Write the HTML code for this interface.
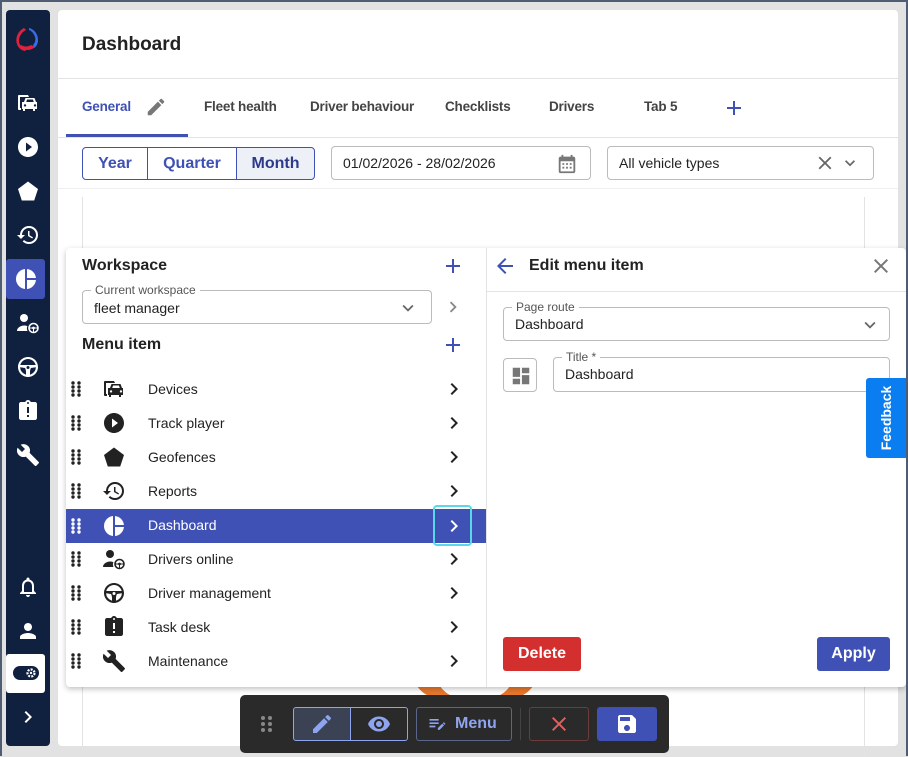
<!DOCTYPE html>
<html><head><meta charset="utf-8"><style>
*{box-sizing:border-box;margin:0;padding:0}
body{width:908px;height:756px;overflow:hidden;background:#e2e2e2;font-family:"Liberation Sans",sans-serif;position:relative;color:#222}
.abs{position:absolute}
.frame{left:0;top:0;width:908px;height:756px;border:2px solid #4f5d72;border-bottom:none;pointer-events:none}
.side{left:6px;top:10px;width:44px;height:736px;background:#10203f;border-radius:4px}
.si{position:absolute;left:10px;width:24px;height:24px;fill:#fff}
.card{left:58px;top:10px;width:840px;height:736px;background:#fff;border-radius:4px}
.hr{position:absolute;height:1px;background:#e3e3e3}
.tab{position:absolute;top:89px;font-size:13.5px;font-weight:bold;color:#444;letter-spacing:-0.2px}
.seg{position:absolute;top:137px;height:33px;border:1px solid #3f51b5;color:#3f51b5;font-size:16px;font-weight:bold;text-align:center;line-height:31px}
.inp{position:absolute;border:1px solid #bbb;border-radius:4px;font-size:14px;color:#222}
.lbl{position:absolute;top:-8px;left:8px;background:#fff;padding:0 4px;font-size:12px;color:#555;line-height:14px}
.row{position:absolute;left:66px;width:420px;height:34px;font-size:14px;color:#222}
.row .t{position:absolute;left:82px;top:9px}
.row svg{position:absolute}
.ic{width:24px;height:24px;fill:#222}
.dg{width:12px;height:18px}
</style></head><body>
<svg width="0" height="0" style="position:absolute"><defs>
<symbol id="play" viewBox="0 0 24 24"><path d="M12 2C6.48 2 2 6.48 2 12s4.48 10 10 10 10-4.48 10-10S17.52 2 12 2zm-2 14.5v-9l6 4.5-6 4.5z"/></symbol>
<symbol id="pent" viewBox="0 0 24 24"><path d="M12 2.5 22 10l-3.8 11.5H5.8L2 10z"/></symbol>
<symbol id="hist" viewBox="0 0 24 24"><path d="M13 3a9 9 0 0 0-9 9H1l3.89 3.89.07.14L9 12H6c0-3.87 3.130-7 7-7s7 3.13 7 7-3.13 7-7 7c-1.93 0-3.68-.79-4.94-2.06l-1.42 1.42A8.954 8.954 0 0 0 13 21a9 9 0 0 0 0-18zm-1 5v5l4.28 2.54.72-1.21-3.5-2.08V8H12z"/></symbol>
<symbol id="pie" viewBox="0 0 24 24"><path d="M11 2.05A10 10 0 0 0 11 21.950zM13 2.05V11h8.95A10 10 0 0 0 13 2.05zM13 13v8.95A10 10 0 0 0 21.95 13z"/></symbol>
<symbol id="drv" viewBox="0 0 24 24"><circle cx="8" cy="7" r="4"/><path d="M1 20c0-3.5 4-5.5 7-5.5 1.2 0 2.4.2 3.4.6A6 6 0 0 0 11.5 20z"/><circle cx="17.5" cy="17" r="4.5" fill="none" stroke="currentColor" stroke-width="1.6"/><circle cx="17.5" cy="17" r="1.4"/><path d="M13.5 16.5h8v1h-8zM17 17h1v4h-1z"/></symbol>
<symbol id="steer" viewBox="0 0 24 24"><path d="M12 2C6.48 2 2 6.48 2 12s4.48 10 10 10 10-4.48 10-10S17.52 2 12 2zm0 2c3.7 0 6.8 2.5 7.7 6H4.3C5.2 6.5 8.3 4 12 4zM4.1 12.2 9 13c.6 1 1 2.5 1 4v2.7a8 8 0 0 1-5.9-7.5zM14 19.7V17c0-1.5.4-3 1-4l4.9-.8A8 8 0 0 1 14 19.7zM12 14a1.5 1.5 0 1 1 0-3 1.5 1.5 0 0 1 0 3z"/></symbol>
<symbol id="task" viewBox="0 0 24 24"><path d="M19 3h-4.18C14.4 1.84 13.3 1 12 1c-1.3 0-2.4.84-2.82 2H5c-1.1 0-2 .9-2 2v14c0 1.1.9 2 2 2h14c1.1 0 2-.9 2-2V5c0-1.1-.9-2-2-2zm-6 15h-2v-2h2v2zm0-4h-2V8h2v6zm-1-9c-.55 0-1-.45-1-1s.45-1 1-1 1 .45 1 1-.45 1-1 1z"/></symbol>
<symbol id="wr" viewBox="0 0 24 24"><path d="M22.7 19l-9.1-9.1c.9-2.3.4-5-1.5-6.9-2-2-5-2.4-7.4-1.3L9 6 6 9 1.6 4.7C.4 7.1.9 10.1 2.9 12.1c1.9 1.9 4.6 2.4 6.9 1.5l9.1 9.1c.4.4 1 .4 1.4 0l2.3-2.3c.5-.4.5-1.1.1-1.4z"/></symbol>
<symbol id="dev" viewBox="0 0 24 24"><path d="M3 4h9l1 2H4v11h1v2H3c-1 0-1-1-1-1V5c0-1 1-1 1-1z"/><path d="M8 11l1.5-4h9l1.5 4h1v7h-2v2h-2v-2H9v2H7v-2H6v-7zm2.2 0h7.6l-.9-2.5h-5.8zM9 13.2a1.2 1.2 0 1 0 0 2.4 1.2 1.2 0 0 0 0-2.4zm10 0a1.2 1.2 0 1 0 0 2.4 1.2 1.2 0 0 0 0-2.4z"/></symbol>
<symbol id="chev" viewBox="0 0 24 24"><path d="M10 6 8.59 7.41 13.17 12l-4.58 4.59L10 18l6-6z"/></symbol>
<symbol id="drag" viewBox="0 0 12 18"><circle cx="3" cy="3" r="1.7"/><circle cx="9" cy="3" r="1.7"/><circle cx="3" cy="7" r="1.7"/><circle cx="9" cy="7" r="1.7"/><circle cx="3" cy="11" r="1.7"/><circle cx="9" cy="11" r="1.7"/><circle cx="3" cy="15" r="1.7"/><circle cx="9" cy="15" r="1.7"/></symbol>
<symbol id="edit" viewBox="0 0 24 24"><path d="M3 17.25V21h3.75L17.81 9.94l-3.75-3.75L3 17.25zM20.71 7.04a1 1 0 0 0 0-1.41l-2.34-2.34a1 1 0 0 0-1.41 0l-1.83 1.83 3.75 3.75 1.83-1.83z"/></symbol>
<symbol id="plus" viewBox="0 0 24 24"><path d="M19 13h-6v6h-2v-6H5v-2h6V5h2v6h6v2z"/></symbol>
</defs></svg>

<div class="abs side">
  <svg class="si" style="top:15px;left:7px;width:30px;height:30px" viewBox="0 0 30 30"><path d="M11 3C5 6 2 13 4 19c1 4 5 7 9 7l-2-3c-3-1-5-4-5-7 0-5 3-9 7-11z" fill="#e0223c"/><path d="M6 22c5 4 12 4 16 0l-4-2c-3 2-7 2-10 0z" fill="#e0223c"/><path d="M16 3c5 1 9 6 9 12 0 4-2 7-4 8l-1-3c2-2 3-5 2-8-1-3-3-6-6-7z" fill="#3d6be8"/></svg>
  <svg class="si" style="top:81px"><use href="#dev"/></svg>
  <svg class="si" style="top:125px"><use href="#play"/></svg>
  <svg class="si" style="top:169px"><use href="#pent"/></svg>
  <svg class="si" style="top:213px"><use href="#hist"/></svg>
  <div class="abs" style="left:0;top:249px;width:39px;height:40px;background:#3f51b5;border-radius:3px"></div>
  <svg class="si" style="top:257px;left:8px"><use href="#pie"/></svg>
  <svg class="si" style="top:301px;color:#fff"><use href="#drv"/></svg>
  <svg class="si" style="top:345px"><use href="#steer"/></svg>
  <svg class="si" style="top:389px"><use href="#task"/></svg>
  <svg class="si" style="top:433px"><use href="#wr"/></svg>
  <svg class="si" style="top:565px" viewBox="0 0 24 24"><path d="M12 22c1.1 0 2-.9 2-2h-4c0 1.1.9 2 2 2zm6-6v-5c0-3.07-1.64-5.64-4.5-6.32V4c0-.83-.67-1.5-1.5-1.5s-1.5.67-1.5 1.5v.68C7.63 5.36 6 7.92 6 11v5l-2 2v1h16v-1l-2-2zm-2 1H8v-6c0-2.48 1.51-4.5 4-4.5s4 2.020 4 4.5v6z"/></svg>
  <svg class="si" style="top:609px" viewBox="0 0 24 24"><path d="M12 12c2.21 0 4-1.79 4-4s-1.79-4-4-4-4 1.79-4 4 1.79 4 4 4zm0 2c-2.67 0-8 1.34-8 4v2h16v-2c0-2.66-5.33-4-8-4z"/></svg>
  <div class="abs" style="left:0;top:644px;width:39px;height:39px;background:#fff;border-radius:3px"></div>
  <svg class="abs" style="left:6px;top:654px;width:28px;height:18px" viewBox="0 0 28 18"><rect x="1" y="2" width="26" height="14" rx="7" fill="#10203f"/><circle cx="19" cy="9" r="3.5" fill="none" stroke="#fff" stroke-width="2.2" stroke-dasharray="2 1.2"/><circle cx="19" cy="9" r="1.2" fill="#fff"/></svg>
  <svg class="si" style="top:695px" viewBox="0 0 24 24"><use href="#chev"/></svg>
</div>

<div class="abs card">
  <div class="abs" style="left:24px;top:24px;font-size:19px;font-weight:bold;color:#222">Dashboard</div>
  <div class="hr" style="left:0;top:68px;width:840px"></div>
  <div class="tab" style="left:24px;color:#3f51b5">General</div>
  <svg class="abs" style="left:87px;top:86px;width:22px;height:22px;fill:#777"><use href="#edit"/></svg>
  <div class="abs" style="left:8px;top:124px;width:122px;height:3px;background:#3f51b5"></div>
  <div class="tab" style="left:146px">Fleet health</div>
  <div class="tab" style="left:252px">Driver behaviour</div>
  <div class="tab" style="left:387px">Checklists</div>
  <div class="tab" style="left:491px">Drivers</div>
  <div class="tab" style="left:586px">Tab 5</div>
  <svg class="abs" style="left:664px;top:86px;width:24px;height:24px;fill:#3f51b5"><use href="#plus"/></svg>
  <div class="hr" style="left:0;top:127px;width:840px"></div>
  <div class="seg" style="left:24px;width:66px;border-radius:4px 0 0 4px">Year</div>
  <div class="seg" style="left:89px;width:90px">Quarter</div>
  <div class="seg" style="left:178px;width:79px;border-radius:0 4px 4px 0;background:#eef0f8;color:#2c3a8c">Month</div>
  <div class="inp" style="left:273px;top:136px;width:260px;height:34px;padding:8px 11px">01/02/2026 - 28/02/2026
    <svg class="abs" style="left:224px;top:6px;width:22px;height:22px" viewBox="0 0 24 24"><path fill="#777" d="M19 4h-1V2h-2v2H8V2H6v2H5c-1.1 0-2 .9-2 2v14c0 1.1.9 2 2 2h14c1.1 0 2-.9 2-2V6c0-1.1-.9-2-2-2zm0 16H5V9h14v11z"/><path fill="#777" d="M7 11h2v2H7zm4 0h2v2h-2zm4 0h2v2h-2zm-8 4h2v2H7zm4 0h2v2h-2zm4 0h2v2h-2z"/></svg></div>
  <div class="inp" style="left:549px;top:136px;width:267px;height:34px;padding:8px 11px">All vehicle types
    <svg class="abs" style="left:206px;top:5px;width:22px;height:22px" viewBox="0 0 24 24"><path fill="#666" d="M19 6.41 17.59 5 12 10.59 6.41 5 5 6.41 10.59 12 5 17.59 6.41 19 12 13.41 17.59 19 19 17.59 13.41 12z"/></svg>
    <svg class="abs" style="left:232px;top:6px;width:20px;height:20px" viewBox="0 0 24 24"><path fill="#666" d="M7.41 8.59 12 13.17l4.59-4.58L18 10l-6 6-6-6z"/></svg></div>
  <div class="hr" style="left:0;top:178px;width:840px;background:#eee"></div>
  <div class="abs" style="left:24px;top:187px;width:1px;height:560px;background:#e3e3e3"></div>
  <div class="abs" style="left:806px;top:187px;width:1px;height:560px;background:#e3e3e3"></div>
</div>

<div class="abs" style="left:413px;top:672px;width:124px;height:26px;background:#e8782c;border-radius:0 0 60px 60px"></div>
<div class="abs" style="left:436px;top:672px;width:78px;height:26px;background:#fff;border-radius:0 0 40px 40px"></div>

<div class="abs" style="left:66px;top:248px;width:840px;height:439px;background:#fff;border-radius:4px;box-shadow:0 2px 6px rgba(0,0,0,.25)"></div>
<div class="abs" style="left:486px;top:248px;width:1px;height:439px;background:#e3e3e3"></div>
<div class="abs" style="left:82px;top:257px;font-size:16px;font-weight:bold">Workspace</div>
<svg class="abs" style="left:441px;top:254px;width:24px;height:24px;fill:#3f51b5"><use href="#plus"/></svg>
<div class="inp" style="left:82px;top:290px;width:350px;height:34px;padding:9px 11px;font-size:14px"><div class="lbl">Current workspace</div>fleet manager
  <svg class="abs" style="left:314px;top:6px;width:22px;height:22px;fill:#666" viewBox="0 0 24 24"><path d="M7.41 8.59 12 13.17l4.59-4.58L18 10l-6 6-6-6z"/></svg></div>
<svg class="abs" style="left:442px;top:296px;width:22px;height:22px;fill:#888"><use href="#chev"/></svg>
<div class="abs" style="left:82px;top:336px;font-size:16px;font-weight:bold">Menu item</div>
<svg class="abs" style="left:441px;top:333px;width:24px;height:24px;fill:#3f51b5"><use href="#plus"/></svg>

<div class="row" style="top:372px"><svg class="ic dg" style="left:4px;top:8px"><use href="#drag"/></svg><svg class="ic" style="left:36px;top:5px"><use href="#dev"/></svg><span class="t">Devices</span><svg class="ic" style="left:376px;top:5px"><use href="#chev"/></svg></div>
<div class="row" style="top:406px"><svg class="ic dg" style="left:4px;top:8px"><use href="#drag"/></svg><svg class="ic" style="left:36px;top:5px"><use href="#play"/></svg><span class="t">Track player</span><svg class="ic" style="left:376px;top:5px"><use href="#chev"/></svg></div>
<div class="row" style="top:440px"><svg class="ic dg" style="left:4px;top:8px"><use href="#drag"/></svg><svg class="ic" style="left:36px;top:5px"><use href="#pent"/></svg><span class="t">Geofences</span><svg class="ic" style="left:376px;top:5px"><use href="#chev"/></svg></div>
<div class="row" style="top:474px"><svg class="ic dg" style="left:4px;top:8px"><use href="#drag"/></svg><svg class="ic" style="left:36px;top:5px"><use href="#hist"/></svg><span class="t">Reports</span><svg class="ic" style="left:376px;top:5px"><use href="#chev"/></svg></div>
<div class="row" style="top:509px;background:#3f51b5;color:#fff"><svg class="ic dg" style="left:4px;top:8px;fill:#fff"><use href="#drag"/></svg><svg class="ic" style="left:36px;top:5px;fill:#fff"><use href="#pie"/></svg><span class="t" style="top:8px">Dashboard</span>
  <div class="abs" style="left:367px;top:-4px;width:39px;height:41px;border:2px solid #5ad8e8;border-radius:4px"></div><svg class="ic" style="left:376px;top:5px;fill:#fff"><use href="#chev"/></svg></div>
<div class="row" style="top:542px"><svg class="ic dg" style="left:4px;top:8px"><use href="#drag"/></svg><svg class="ic" style="left:36px;top:5px;color:#222"><use href="#drv"/></svg><span class="t">Drivers online</span><svg class="ic" style="left:376px;top:5px"><use href="#chev"/></svg></div>
<div class="row" style="top:576px"><svg class="ic dg" style="left:4px;top:8px"><use href="#drag"/></svg><svg class="ic" style="left:36px;top:5px"><use href="#steer"/></svg><span class="t">Driver management</span><svg class="ic" style="left:376px;top:5px"><use href="#chev"/></svg></div>
<div class="row" style="top:610px"><svg class="ic dg" style="left:4px;top:8px"><use href="#drag"/></svg><svg class="ic" style="left:36px;top:5px"><use href="#task"/></svg><span class="t">Task desk</span><svg class="ic" style="left:376px;top:5px"><use href="#chev"/></svg></div>
<div class="row" style="top:644px"><svg class="ic dg" style="left:4px;top:8px"><use href="#drag"/></svg><svg class="ic" style="left:36px;top:5px"><use href="#wr"/></svg><span class="t">Maintenance</span><svg class="ic" style="left:376px;top:5px"><use href="#chev"/></svg></div>

<svg class="abs" style="left:493px;top:254px;width:24px;height:24px;fill:#3f51b5" viewBox="0 0 24 24"><path d="M20 11H7.83l5.59-5.59L12 4l-8 8 8 8 1.41-1.41L7.83 13H20v-2z"/></svg>
<div class="abs" style="left:529px;top:257px;font-size:16px;font-weight:bold">Edit menu item</div>
<svg class="abs" style="left:869px;top:254px;width:24px;height:24px;fill:#777" viewBox="0 0 24 24"><path d="M19 6.41 17.59 5 12 10.59 6.41 5 5 6.41 10.59 12 5 17.59 6.41 19 12 13.41 17.59 19 19 17.59 13.41 12z"/></svg>
<div class="hr" style="left:487px;top:291px;width:419px"></div>
<div class="inp" style="left:503px;top:307px;width:387px;height:34px;padding:8px 11px"><div class="lbl">Page route</div>Dashboard
  <svg class="abs" style="left:355px;top:6px;width:22px;height:22px;fill:#666" viewBox="0 0 24 24"><path d="M7.41 8.59 12 13.17l4.59-4.58L18 10l-6 6-6-6z"/></svg></div>
<div class="inp" style="left:503px;top:358px;width:34px;height:34px">
  <svg class="abs" style="left:6px;top:6px;width:22px;height:22px;fill:#777" viewBox="0 0 24 24"><path d="M3 3h8v10H3zM13 3h8v6h-8zM13 11h8v10h-8zM3 15h8v6H3z"/></svg></div>
<div class="inp" style="left:553px;top:357px;width:337px;height:35px;padding:8px 11px"><div class="lbl">Title *</div>Dashboard</div>
<div class="abs" style="left:866px;top:378px;width:40px;height:80px;background:#0a7ef0;border-radius:3px 0 0 3px"></div>
<div class="abs" style="left:846px;top:408px;width:80px;height:20px;color:#fff;font-size:14px;font-weight:bold;text-align:center;transform:rotate(-90deg);line-height:20px">Feedback</div>
<div class="abs" style="left:503px;top:637px;width:78px;height:34px;background:#d32f2f;border-radius:3px;color:#fff;font-weight:bold;font-size:16px;text-align:center;line-height:34px">Delete</div>
<div class="abs" style="left:817px;top:637px;width:73px;height:34px;background:#3f51b5;border-radius:3px;color:#fff;font-weight:bold;font-size:16px;text-align:center;line-height:34px">Apply</div>

<div class="abs" style="left:240px;top:695px;width:429px;height:58px;background:#2a2a2a;border-radius:5px"></div>
<svg class="abs" style="left:257px;top:712px;width:20px;height:24px;fill:#888" viewBox="0 0 20 24"><circle cx="6" cy="6" r="2"/><circle cx="13" cy="6" r="2"/><circle cx="6" cy="12" r="2"/><circle cx="13" cy="12" r="2"/><circle cx="6" cy="18" r="2"/><circle cx="13" cy="18" r="2"/></svg>
<div class="abs" style="left:293px;top:707px;width:58px;height:34px;background:#3a4254;border:1px solid #8ea4ee;border-radius:3px 0 0 3px"></div>
<div class="abs" style="left:350px;top:707px;width:58px;height:34px;border:1px solid #8ea4ee;border-radius:0 3px 3px 0"></div>
<svg class="abs" style="left:310px;top:712px;width:24px;height:24px;fill:#8ea4ee"><use href="#edit"/></svg>
<svg class="abs" style="left:366px;top:712px;width:26px;height:24px;fill:#8ea4ee" viewBox="0 0 24 24"><path d="M12 4.5C7 4.5 2.73 7.61 1 12c1.73 4.39 6 7.5 11 7.5s9.27-3.11 11-7.5c-1.73-4.39-6-7.5-11-7.5zM12 17c-2.76 0-5-2.24-5-5s2.24-5 5-5 5 2.24 5 5-2.24 5-5 5zm0-8c-1.66 0-3 1.34-3 3s1.34 3 3 3 3-1.34 3-3-1.34-3-3-3z"/></svg>
<div class="abs" style="left:416px;top:707px;width:96px;height:34px;border:1px solid #5a6788;border-radius:3px;color:#8ea4ee;font-weight:bold;font-size:16px;line-height:32px;padding-left:38px">Menu</div>
<svg class="abs" style="left:426px;top:714px;width:22px;height:20px;fill:#8ea4ee" viewBox="0 0 24 24"><path d="M3 6h11v2H3zM3 10h11v2H3zM3 14h7v2H3zM13 19v-2.1l5.3-5.3 2.1 2.1-5.3 5.3zM19 10.9l1.1-1.1 2.1 2.1-1.1 1.1z"/></svg>
<div class="abs" style="left:520px;top:708px;width:1px;height:32px;background:#444"></div>
<div class="abs" style="left:529px;top:707px;width:60px;height:34px;border:1px solid #6e3b3b;border-radius:3px"></div>
<svg class="abs" style="left:547px;top:712px;width:24px;height:24px;fill:#e06060" viewBox="0 0 24 24"><path d="M19 6.41 17.59 5 12 10.59 6.41 5 5 6.41 10.59 12 5 17.59 6.41 19 12 13.41 17.59 19 19 17.59 13.41 12z"/></svg>
<div class="abs" style="left:597px;top:707px;width:60px;height:34px;background:#3f51b5;border-radius:3px"></div>
<svg class="abs" style="left:615px;top:712px;width:24px;height:24px;fill:#fff" viewBox="0 0 24 24"><path d="M17 3H5c-1.11 0-2 .9-2 2v14c0 1.1.89 2 2 2h14c1.1 0 2-.9 2-2V7l-4-4zm-5 16c-1.66 0-3-1.34-3-3s1.34-3 3-3 3 1.34 3 3-1.34 3-3 3zm3-10H5V5h10v4z"/></svg>
<div class="abs frame"></div>
</body></html>
